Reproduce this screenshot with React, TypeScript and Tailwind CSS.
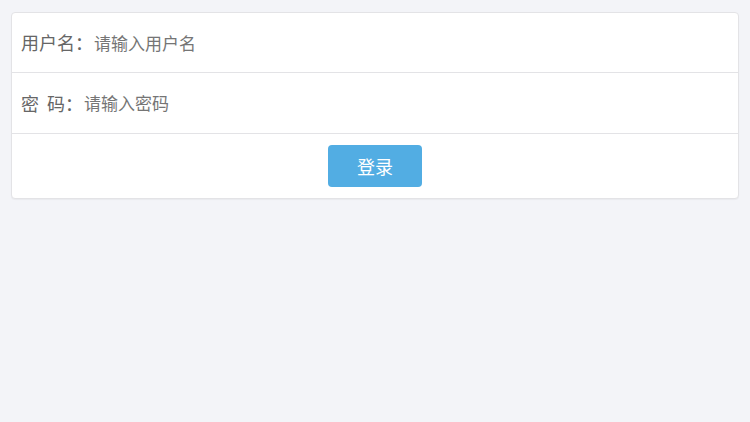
import { useState } from "react"

export default function App() {
    const [username, setUsername] = useState("")
    const [password, setPassword] = useState("")

    return (
        <div className="min-h-screen bg-[#f3f4f8] px-[11px] pt-[12px] font-['Noto_Sans_CJK_SC',sans-serif]">
            <div className="rounded-[4px] border border-[#e3e3e6] bg-white shadow-[0_1px_1px_rgba(0,0,0,0.04)]">
                <div className="flex h-[60px] items-center border-b border-[#e3e3e6] pl-[9px]">
                    <label className="shrink-0 text-[18px] text-[#666]">用户名：</label>
                    <input
                        value={username}
                        onChange={(e) => setUsername(e.target.value)}
                        placeholder="请输入用户名"
                        className="ml-[1px] flex-1 bg-transparent text-[17px] text-[#555] outline-none placeholder:text-[#757575]"
                    />
                </div>
                <div className="flex h-[61px] items-center border-b border-[#e3e3e6] pl-[9px]">
                    <label className="shrink-0 text-[18px] text-[#666]">密&nbsp;&nbsp;码：</label>
                    <input
                        type="password"
                        value={password}
                        onChange={(e) => setPassword(e.target.value)}
                        placeholder="请输入密码"
                        className="ml-[1px] flex-1 bg-transparent text-[17px] text-[#555] outline-none placeholder:text-[#757575]"
                    />
                </div>
                <div className="flex h-[64px] items-center justify-center">
                    <button className="h-[42px] w-[94px] rounded-[4px] bg-[#52ade3] text-[18px] text-white">
                        登录
                    </button>
                </div>
            </div>
        </div>
    )
}
